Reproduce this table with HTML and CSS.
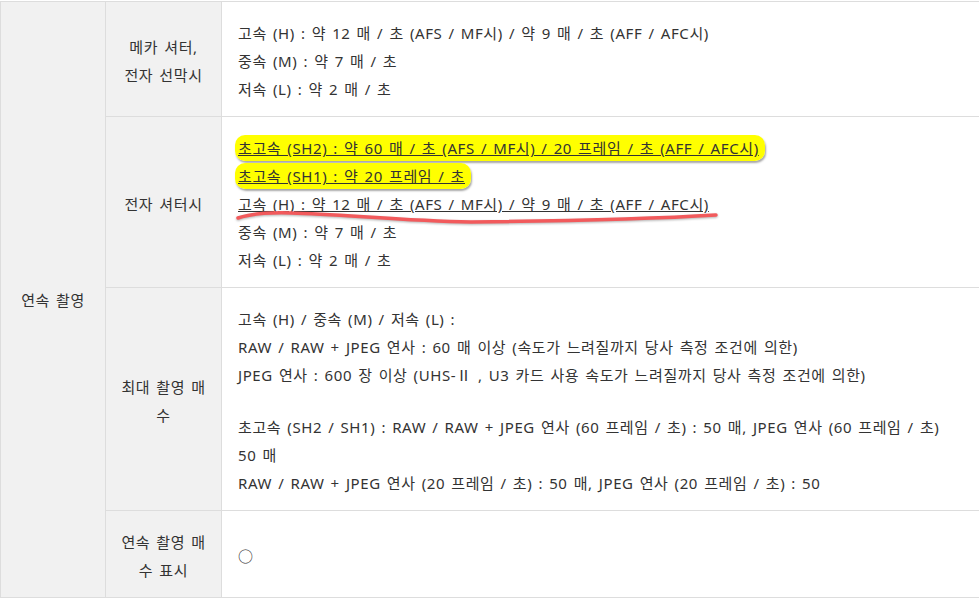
FILE: index.html
```html
<!DOCTYPE html>
<html lang="ko">
<head>
    <meta charset="UTF-8">
    <title>연속 촬영 사양</title>
    <link rel="stylesheet" href="styles.css">
</head>
<body>
    <table class="spec">
        <colgroup>
            <col class="col-group">
            <col class="col-label">
            <col>
        </colgroup>
        <tr>
            <th class="group" rowspan="4">연속 촬영</th>
            <th class="label">메카 셔터,<br>전자 선막시</th>
            <td class="value">
                <div>고속 (H) : 약 12 매 / 초 (AFS / MF시) / 약 9 매 / 초 (AFF / AFC시)</div>
                <div>중속 (M) : 약 7 매 / 초</div>
                <div>저속 (L) : 약 2 매 / 초</div>
            </td>
        </tr>
        <tr>
            <th class="label">전자 셔터시</th>
            <td class="value">
                <div><u class="mark">초고속 (SH2) : 약 60 매 / 초 (AFS / MF시) / 20 프레임 / 초 (AFF / AFC시)</u></div>
                <div><u class="mark">초고속 (SH1) : 약 20 프레임 / 초</u></div>
                <div class="struck">
                    <u>고속 (H) : 약 12 매 / 초 (AFS / MF시) / 약 9 매 / 초 (AFF / AFC시)</u>
                    <svg class="pen" width="484" height="18" viewBox="0 0 484 18">
                        <path d="M2 10 Q20 4 55 5 C105 6 165 13 235 14 C325 13 415 11 480 7" fill="none" stroke="#f25a5c" stroke-width="3.5" stroke-linecap="round"/>
                    </svg>
                </div>
                <div>중속 (M) : 약 7 매 / 초</div>
                <div>저속 (L) : 약 2 매 / 초</div>
            </td>
        </tr>
        <tr>
            <th class="label">최대 촬영 매수</th>
            <td class="value">
                <div>고속 (H) / 중속 (M) / 저속 (L) :</div>
                <div>RAW / RAW + JPEG 연사 : 60 매 이상 (속도가 느려질까지 당사 측정 조건에 의한)</div>
                <div>JPEG 연사 : 600 장 이상 (UHS-Ⅱ , U3 카드 사용 속도가 느려질까지 당사 측정 조건에 의한)</div>
                <div class="gap">초고속 (SH2 / SH1) : RAW / RAW + JPEG 연사 (60 프레임 / 초) : 50 매, JPEG 연사 (60 프레임 / 초) 50 매</div>
                <div>RAW / RAW + JPEG 연사 (20 프레임 / 초) : 50 매, JPEG 연사 (20 프레임 / 초) : 50</div>
            </td>
        </tr>
        <tr>
            <th class="label">연속 촬영 매수 표시</th>
            <td class="value">○</td>
        </tr>
    </table>
</body>
</html>
```

FILE: styles.css
```css
body {
    margin: 0;
    padding: 1px 0 0 0;
    background: #fff;
    font-family: "Noto Sans", "Noto Sans CJK KR", sans-serif;
    font-size: 15px;
    line-height: 28px;
    letter-spacing: 0.6px;
    word-spacing: 1.6px;
    color: #333;
}
.spec {
    border-collapse: collapse;
    width: 980px;
    table-layout: fixed;
}
.col-group {
    width: 105px;
}
.col-label {
    width: 116px;
}
.spec th, .spec td {
    border: 1px solid #ddd;
    font-weight: normal;
    vertical-align: middle;
}
.spec th {
    background: #f1f1f1;
    text-align: center;
}
.group {
    padding: 0 6px;
}
.label {
    padding: 17px 11px 13px;
}
.value {
    padding: 17px 24px 13px 16px;
    text-align: left;
}
.value .gap {
    margin-top: 24px;
}
.mark {
    background: #ffff00;
    border-radius: 10px;
    padding: 3px 6px 3px 3px;
    margin-left: -3px;
    box-shadow: 1px 2px 2px rgba(0, 0, 0, 0.35);
}
.struck {
    position: relative;
}
.pen {
    position: absolute;
    left: -2px;
    top: 18px;
    filter: drop-shadow(0 1px 1px rgba(0, 0, 0, 0.3));
}
```
